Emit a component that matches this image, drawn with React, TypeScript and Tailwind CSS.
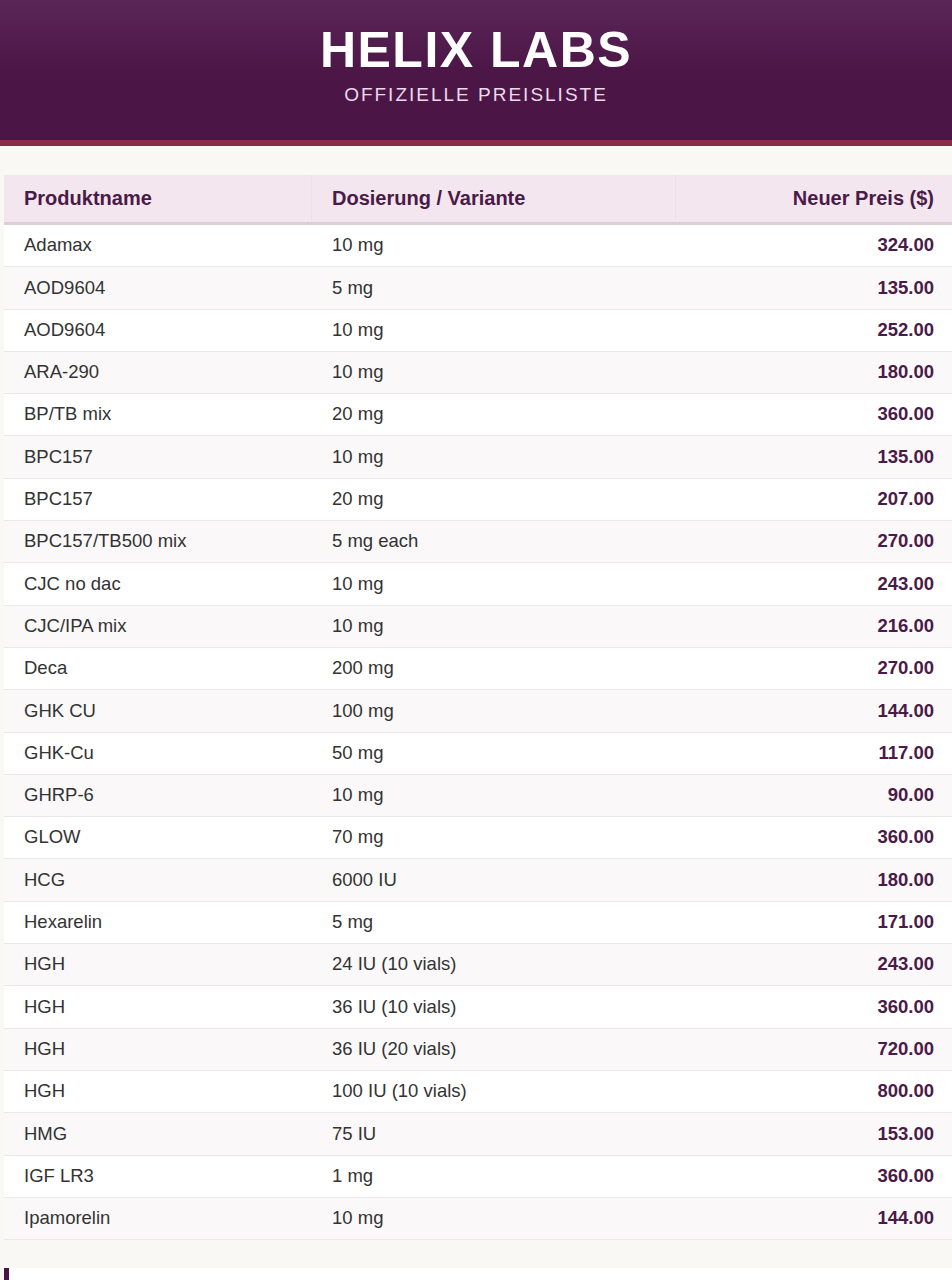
const rows: [string, string, string][] = [
  ["Adamax", "10 mg", "324.00"],
  ["AOD9604", "5 mg", "135.00"],
  ["AOD9604", "10 mg", "252.00"],
  ["ARA-290", "10 mg", "180.00"],
  ["BP/TB mix", "20 mg", "360.00"],
  ["BPC157", "10 mg", "135.00"],
  ["BPC157", "20 mg", "207.00"],
  ["BPC157/TB500 mix", "5 mg each", "270.00"],
  ["CJC no dac", "10 mg", "243.00"],
  ["CJC/IPA mix", "10 mg", "216.00"],
  ["Deca", "200 mg", "270.00"],
  ["GHK CU", "100 mg", "144.00"],
  ["GHK-Cu", "50 mg", "117.00"],
  ["GHRP-6", "10 mg", "90.00"],
  ["GLOW", "70 mg", "360.00"],
  ["HCG", "6000 IU", "180.00"],
  ["Hexarelin", "5 mg", "171.00"],
  ["HGH", "24 IU (10 vials)", "243.00"],
  ["HGH", "36 IU (10 vials)", "360.00"],
  ["HGH", "36 IU (20 vials)", "720.00"],
  ["HGH", "100 IU (10 vials)", "800.00"],
  ["HMG", "75 IU", "153.00"],
  ["IGF LR3", "1 mg", "360.00"],
  ["Ipamorelin", "10 mg", "144.00"],
];

export default function App() {
  return (
    <div className="min-h-[1280px] bg-[#f9f8f5] font-['Liberation_Sans',Arial,sans-serif]">
      <header className="h-[146px] bg-gradient-to-b from-[#5a2658] via-[#4c1747] to-[#4a1445] border-b-[6px] border-[#8c2a46] flex flex-col items-center">
        <h1 className="mt-[22px] text-[50px] leading-[56px] font-bold tracking-[1.5px] text-white">
          HELIX LABS
        </h1>
        <p className="mt-[6px] text-[19px] leading-[22px] tracking-[2px] text-[#e9dbe9]">
          OFFIZIELLE PREISLISTE
        </p>
      </header>

      <div className="pt-[29px] pl-[4px]">
        <div className="grid grid-cols-[308px_364px_1fr] h-[50px] bg-[#f3e6ee] border-b-[3px] border-[#dccdd6] text-[20px] font-bold text-[#4a1a48]">
          <div className="flex items-center pl-[20px] pb-[2px] border-r border-[#eee0e9]">Produktname</div>
          <div className="flex items-center pl-[20px] pb-[2px] border-r border-[#eee0e9]">Dosierung / Variante</div>
          <div className="flex items-center justify-end pr-[18px] pb-[2px]">Neuer Preis ($)</div>
        </div>
        {rows.map(([name, dose, price], i) => (
          <div
            key={i}
            className={`grid grid-cols-[308px_364px_1fr] h-[42.3px] border-b border-[#ebe7e9] text-[18.5px] text-[#333333] ${
              i % 2 === 0 ? "bg-white" : "bg-[#faf8f9]"
            }`}
          >
            <div className="flex items-center pl-[20px] pb-[1px]">{name}</div>
            <div className="flex items-center pl-[20px] pb-[1px]">{dose}</div>
            <div className="flex items-center justify-end pr-[18px] pb-[1px] font-bold text-[#4a1a48]">{price}</div>
          </div>
        ))}

        <div className="mt-[28px] h-[40px] bg-white border-l-[5px] border-[#4a1445]" />
      </div>
    </div>
  );
}
